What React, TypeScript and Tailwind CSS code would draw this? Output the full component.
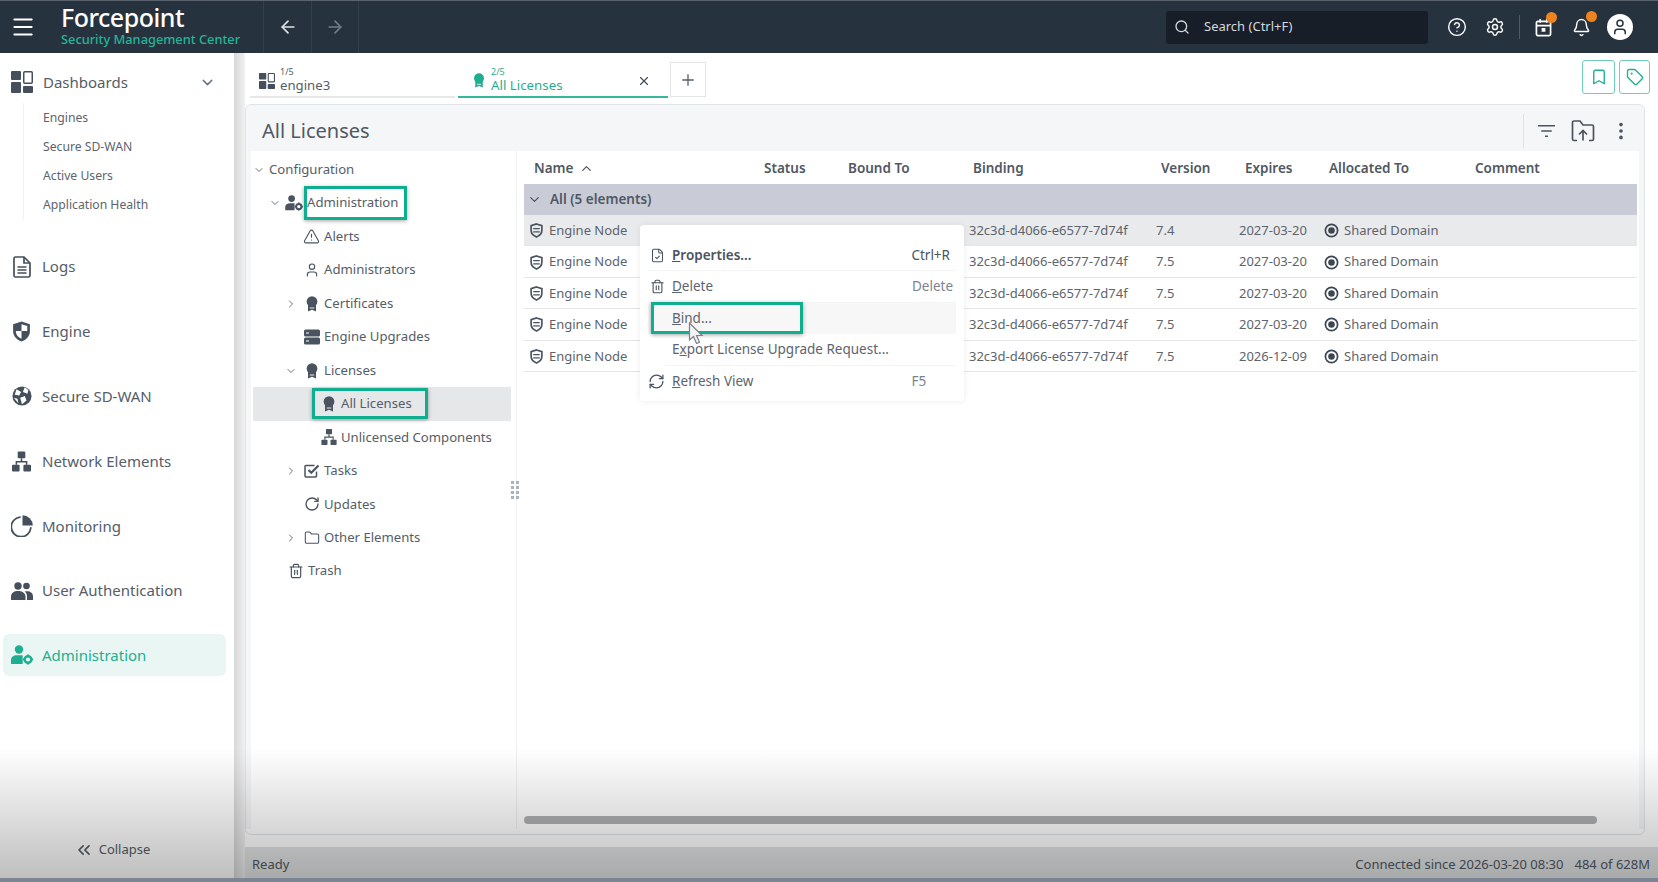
import type { ReactNode } from "react";
import {
  ArrowLeft,
  ArrowRight,
  Bell,
  Bookmark,
  ChevronDown,
  ChevronRight,
  ChevronUp,
  ChevronsLeft,
  CircleHelp,
  FileCheck,
  Folder,
  Menu,
  MoreVertical,
  Plus,
  RefreshCw,
  RotateCw,
  Search,
  Settings,
  Tag,
  Trash2,
  TriangleAlert,
  User,
  X,
} from "lucide-react";

const FONT = { fontFamily: '"Noto Sans", "Open Sans", sans-serif' };

function DashIcon({ className }: { className?: string }) {
  return (
    <svg viewBox="0 0 22 22" className={className} fill="currentColor">
      <rect x="0" y="0" width="10" height="9" rx="1" />
      <rect x="12.75" y="0.75" width="8.5" height="11.5" rx="1" fill="none" stroke="currentColor" strokeWidth="1.5" />
      <rect x="0" y="11" width="10" height="11" rx="1" />
      <rect x="12" y="15" width="10" height="7" rx="1" />
    </svg>
  );
}

function LogsIcon({ className }: { className?: string }) {
  return (
    <svg viewBox="0 0 18 22" className={className} fill="none" stroke="currentColor" strokeWidth="1.7">
      <path d="M2.5 1h8.5l6 6v12.5a1.5 1.5 0 0 1-1.5 1.5h-13A1.5 1.5 0 0 1 1 19.5v-17A1.5 1.5 0 0 1 2.5 1z" />
      <path d="M11 1v6h6M4.5 11h9M4.5 14h9M4.5 17h9" />
    </svg>
  );
}

function ShieldIcon({ className }: { className?: string }) {
  return (
    <svg viewBox="0 0 18 20" className={className}>
      <path d="M9 0.5l8 2.5v6.5c0 5-3.4 8.4-8 10-4.6-1.6-8-5-8-10V3z" fill="currentColor" />
      <path d="M9 3l5.5 1.8V9.5H9zM9 9.5v7.5c-3-1.300-5.300-3.800-5.500-7.500z" fill="#fff" />
    </svg>
  );
}

function GlobeIcon({ className }: { className?: string }) {
  return (
    <svg viewBox="0 0 22 22" className={className}>
      <circle cx="11" cy="11" r="10.500" fill="currentColor" />
      <path d="M5 3.500l5 3-2 4-5-1zM14 1.500l4 3-1 4-5-2zM9 13l5-2 2 5-5 4zM2 13l4 1 1 5z" fill="#fff" />
      <circle cx="11" cy="10" r="2" fill="currentColor" />
    </svg>
  );
}

function NetworkIcon({ className }: { className?: string }) {
  return (
    <svg viewBox="0 0 20 21" className={className} fill="currentColor">
      <rect x="6" y="0" width="8" height="7" rx="1" />
      <rect x="0" y="14" width="8" height="7" rx="1" />
      <rect x="12" y="14" width="8" height="7" rx="1" />
      <path d="M9.200 7h1.600v3h5.400v4h-1.600v-2.400H5.400V14H3.800v-4h5.400z" />
    </svg>
  );
}

function PieIcon({ className }: { className?: string }) {
  return (
    <svg viewBox="0 0 22 22" className={className}>
      <path d="M9 2.200a9.800 9.800 0 1 0 10.800 10.800" fill="none" stroke="currentColor" strokeWidth="1.800" strokeLinecap="round" />
      <path d="M11.500 0.200A10.500 10.500 0 0 1 21.800 10.500H11.500z" fill="currentColor" />
    </svg>
  );
}

function UsersIcon({ className }: { className?: string }) {
  return (
    <svg viewBox="0 0 22 18" className={className} fill="currentColor">
      <circle cx="7" cy="4" r="3.700" />
      <circle cx="15.500" cy="4" r="3.300" />
      <path d="M0 18v-3.500C0 11 3 9 7 9s7.500 2 7.500 5.500V18z" />
      <path d="M16 18v-3.500c0-2-.8-3.700-2.300-4.900.7-.3 1.400-.4 2.300-.4 3.500 0 6 2 6 5V18z" />
    </svg>
  );
}

function AdminIcon({ className }: { className?: string }) {
  return (
    <svg viewBox="0 0 22 20" className={className} fill="currentColor">
      <circle cx="8" cy="4.500" r="4.200" />
      <path d="M0 19v-4c0-3 2.500-4.800 6-4.800h4c1 0 1.700.2 1.700.2V19z" />
      <circle cx="17" cy="14.500" r="3.300" fill="none" stroke="currentColor" strokeWidth="2.400" />
      <path d="M16 9.500h2v2h-2zM16 17.500h2v2h-2zM12 13.500h2v2h-2zM20 13.500h2v2h-2z" />
    </svg>
  );
}

function RibbonIcon({ className }: { className?: string }) {
  return (
    <svg viewBox="0 0 14 18" className={className} fill="currentColor">
      <path d="M2.500 10v7.500l4.500-2 4.500 2V10z" />
      <circle cx="7" cy="6.200" r="6" />
      <path d="M4.500 13h5v1h-5z" fill="#fff" />
    </svg>
  );
}

function ServerIcon({ className }: { className?: string }) {
  return (
    <svg viewBox="0 0 16 15" className={className} fill="currentColor">
      <rect x="0" y="0" width="16" height="7" rx="1.500" />
      <rect x="0" y="8" width="16" height="7" rx="1.500" />
      <rect x="2" y="3" width="3" height="1" fill="#fff" />
      <rect x="2" y="11" width="3" height="1" fill="#fff" />
    </svg>
  );
}

function TaskIcon({ className }: { className?: string }) {
  return (
    <svg viewBox="0 0 16 16" className={className} fill="none" stroke="currentColor" strokeWidth="1.500">
      <path d="M12.500 8.500V13a1 1 0 0 1-1 1H2a1 1 0 0 1-1-1V3.500a1 1 0 0 1 1-1h8.500" />
      <path d="M4.500 7l2.800 2.800L14.500 2.500" strokeWidth="2.200" />
    </svg>
  );
}

function EngineShield({ className }: { className?: string }) {
  return (
    <svg viewBox="0 0 14 16" className={className} fill="none" stroke="currentColor" strokeWidth="1.800">
      <path d="M7 1l5.800 1.800v5c0 3.500-2.500 5.900-5.800 7.200-3.300-1.300-5.800-3.700-5.800-7.200v-5z" />
      <path d="M3.500 6h7M3.500 9.500h7" strokeWidth="1.400" />
    </svg>
  );
}

function DomainIcon({ className }: { className?: string }) {
  return (
    <svg viewBox="0 0 16 16" className={className}>
      <circle cx="8" cy="8" r="6.500" fill="none" stroke="currentColor" strokeWidth="1.800" />
      <circle cx="8" cy="8" r="3.500" fill="currentColor" />
    </svg>
  );
}

function Cursor() {
  return (
    <svg viewBox="0 0 16 24" className="absolute left-[48px] top-[97px] w-[16px] h-[24px]">
      <path d="M1.500 1v17l4-3.500 3 7 3-1.300-3-6.700h5.500z" fill="#f3f4f5" stroke="#7b8087" strokeWidth="1.200" />
    </svg>
  );
}

const subItems = ["Engines", "Secure SD-WAN", "Active Users", "Application Health"];

const navItems = [
  { label: "Logs", icon: <LogsIcon className="w-[18px] h-[22px] ml-[2px]" /> },
  { label: "Engine", icon: <ShieldIcon className="w-[19px] h-[21px] ml-[1px]" /> },
  { label: "Secure SD-WAN", icon: <GlobeIcon className="w-[20px] h-[20px] ml-[1px]" /> },
  { label: "Network Elements", icon: <NetworkIcon className="w-[19px] h-[21px] ml-[1px]" /> },
  { label: "Monitoring", icon: <PieIcon className="w-[22px] h-[22px]" /> },
  { label: "User Authentication", icon: <UsersIcon className="w-[22px] h-[18px]" /> },
];

function Sidebar() {
  return (
    <aside className="w-[234px] h-full flex flex-col bg-white pt-[8px]">
      <div className="h-[42px] flex items-center pl-[11px] pr-[18px] text-[#46505c]">
        <DashIcon className="w-[22px] h-[22px]" />
        <span className="ml-[10px] text-[15px] text-[#555d67]">Dashboards</span>
        <ChevronDown className="ml-auto w-[17px] h-[17px] text-[#6b737d]" />
      </div>
      <div className="ml-[23px] border-l border-[#f0f1f2] text-[12.200px] text-[#5d646d]">
        {subItems.map((s) => (
          <div key={s} className="h-[29.300px] flex items-center pl-[19px]">
            {s}
          </div>
        ))}
      </div>
      <div className="mt-[25.500px] flex flex-col gap-[22.800px]">
        {navItems.map((n) => (
          <div key={n.label} className="h-[42px] flex items-center ml-[3px] mr-[8px] pl-[8px] text-[#46505c]">
            <div className="w-[22px] flex items-center">{n.icon}</div>
            <span className="ml-[9px] text-[15px] text-[#555d67]">{n.label}</span>
          </div>
        ))}
        <div className="h-[42px] flex items-center ml-[3px] mr-[8px] pl-[8px] rounded-md bg-[#e9f6f3] text-[#1fae90]">
          <AdminIcon className="w-[22px] h-[20px]" />
          <span className="ml-[9px] text-[15px]">Administration</span>
        </div>
      </div>
      <div className="mt-auto mb-[18px] pr-[10px] flex items-center justify-center text-[13px] text-[#555d67] gap-[5px]">
        <ChevronsLeft className="w-[20px] h-[20px]" />
        <span>Collapse</span>
      </div>
    </aside>
  );
}

function TopBar() {
  return (
    <header className="h-[53px] shrink-0 flex items-stretch bg-[#27323f] border-t border-[#59626d] text-white">
      <div className="w-[46px] flex items-center justify-center">
        <Menu className="w-[26px] h-[26px]" strokeWidth={1.800} />
      </div>
      <div className="w-[217px] pl-[15px] pt-[3px] flex flex-col">
        <span className="text-[25px] leading-[27px] font-medium tracking-[-0.5px]">Forcepoint</span>
        <span className="text-[12.800px] leading-[15px] mt-[1px] text-[#25b597] font-medium">Security Management Center</span>
      </div>
      <div className="w-[48px] flex items-center justify-center border-l border-[#333f4c]">
        <ArrowLeft className="w-[20px] h-[20px] text-[#dfe3e6]" />
      </div>
      <div className="w-[48px] flex items-center justify-center border-x border-[#333f4c]">
        <ArrowRight className="w-[20px] h-[20px] text-[#737d88]" />
      </div>
      <div className="ml-auto flex items-center pr-[25px]">
        <div className="w-[262px] h-[33px] rounded-[3px] bg-[#171e28] flex items-center pl-[8px] text-[13px] text-[#d5d9dd]">
          <Search className="w-[16px] h-[16px]" />
          <span className="ml-[14px]">Search (Ctrl+F)</span>
        </div>
        <CircleHelp className="ml-[19px] w-[20px] h-[20px]" strokeWidth={1.700} />
        <Settings className="ml-[18px] w-[20px] h-[20px]" strokeWidth={1.700} />
        <div className="ml-[14px] w-px h-[24px] bg-[#515b66]" />
        <div className="relative ml-[15px]">
          <svg viewBox="0 0 18 20" className="w-[17px] h-[19px]" fill="none" stroke="currentColor" strokeWidth="1.800">
            <rect x="1.500" y="3.500" width="15" height="15" rx="1.500" />
            <path d="M1.500 8h15M5.500 1v4M12.500 1v4" />
            <rect x="7" y="10.500" width="4" height="4" fill="currentColor" stroke="none" />
          </svg>
          <span className="absolute -top-[6px] right-[-5px] w-[11px] h-[11px] rounded-full bg-[#ee8420]" />
        </div>
        <div className="relative ml-[20px]">
          <Bell className="w-[19px] h-[19px]" strokeWidth={1.800} />
          <span className="absolute -top-[7px] right-[-6px] w-[11px] h-[11px] rounded-full bg-[#ee8420]" />
        </div>
        <div className="ml-[16px] w-[26px] h-[26px] rounded-full bg-white flex items-center justify-center text-[#27323f]">
          <User className="w-[18px] h-[18px]" strokeWidth={2} />
        </div>
      </div>
    </header>
  );
}

function TabBar() {
  return (
    <div className="h-[51px] shrink-0 flex items-start relative pr-[8px]">
      <div className="ml-[5px] mt-[3px] w-[205px] h-[42px] pt-[9px] border-b-2 border-[#e6e8ea] flex items-center pl-[9px] text-[#46505c]">
        <DashIcon className="w-[16px] h-[16px]" />
        <div className="ml-[5px] flex flex-col">
          <span className="text-[9px] leading-[10px] text-[#555d67]">1/5</span>
          <span className="text-[13.200px] leading-[17px] text-[#555d67]">engine3</span>
        </div>
      </div>
      <div className="ml-[3px] mt-[3px] w-[210px] h-[42px] pt-[9px] border-b-2 border-[#34b79c] flex items-center pl-[15px] pr-[17px] text-[#1fae90]">
        <RibbonIcon className="w-[12px] h-[15px]" />
        <div className="ml-[6px] flex flex-col">
          <span className="text-[9px] leading-[10px]">2/5</span>
          <span className="text-[13.300px] leading-[17px]">All Licenses</span>
        </div>
        <X className="ml-auto w-[14px] h-[14px] text-[#46505c]" />
      </div>
      <div className="ml-[2px] mt-[9px] w-[36px] h-[35px] border border-[#e3e5e8] flex items-center justify-center text-[#555d67]">
        <Plus className="w-[18px] h-[18px]" strokeWidth={1.700} />
      </div>
      <div className="ml-auto mt-[7px] flex gap-[4px]">
        <div className="w-[33px] h-[34px] rounded-[3px] border border-[#6fcdb9] flex items-center justify-center text-[#1fae90]">
          <Bookmark className="w-[18px] h-[18px]" strokeWidth={1.800} />
        </div>
        <div className="w-[31px] h-[34px] rounded-[3px] border border-[#6fcdb9] flex items-center justify-center text-[#1fae90]">
          <Tag className="w-[18px] h-[18px]" strokeWidth={1.800} />
        </div>
      </div>
    </div>
  );
}

type TreeRow = {
  label: string;
  indent: string;
  chevron?: "down" | "right";
  gap?: string;
  icon?: ReactNode;
  selected?: boolean;
  box?: string;
};

const treeIcon = "w-[16px] h-[16px] shrink-0 text-[#4a5460]";

const treeRows: TreeRow[] = [
  { label: "Configuration", indent: "pl-[0px]", chevron: "down" },
  {
    label: "Administration",
    indent: "pl-[16px]",
    chevron: "down",
    icon: <AdminIcon className="w-[18px] h-[16px] shrink-0 text-[#4a5460]" />,
    box: "left-[-3px] w-[103px]",
  },
  { label: "Alerts", indent: "pl-[50px]", icon: <TriangleAlert className="w-[17px] h-[17px] shrink-0 text-[#4a5460]" strokeWidth={1.600} /> },
  { label: "Administrators", indent: "pl-[51px]", icon: <User className={treeIcon} strokeWidth={1.700} /> },
  { label: "Certificates", indent: "pl-[32px]", chevron: "right", gap: "ml-[7px]", icon: <RibbonIcon className={treeIcon} /> },
  { label: "Engine Upgrades", indent: "pl-[51px]", icon: <ServerIcon className={treeIcon} /> },
  { label: "Licenses", indent: "pl-[32px]", chevron: "down", gap: "ml-[7px]", icon: <RibbonIcon className={treeIcon} /> },
  { label: "All Licenses", indent: "pl-[68px]", icon: <RibbonIcon className={treeIcon} />, selected: true },
  { label: "Unlicensed Components", indent: "pl-[68px]", icon: <NetworkIcon className={treeIcon} /> },
  { label: "Tasks", indent: "pl-[32px]", chevron: "right", gap: "ml-[7px]", icon: <TaskIcon className={treeIcon} /> },
  { label: "Updates", indent: "pl-[51px]", icon: <RotateCw className={treeIcon} strokeWidth={2} /> },
  { label: "Other Elements", indent: "pl-[32px]", chevron: "right", gap: "ml-[7px]", icon: <Folder className={treeIcon} strokeWidth={1.600} /> },
  { label: "Trash", indent: "pl-[35px]", icon: <Trash2 className={treeIcon} strokeWidth={1.800} /> },
];

function Highlight({ className }: { className: string }) {
  return <div className={"absolute border-[3px] border-[#0fae8f] shadow-[0_1px_4px_rgba(0,0,0,0.35)] " + className} />;
}

function Tree() {
  return (
    <div className="w-[266px] shrink-0 pl-[2px] pr-[5px] pt-[2px] border-r border-[#eef0f1] text-[13.150px] text-[#555d67] relative">
      {treeRows.map((r) => (
        <div key={r.label} className={"h-[33.480px] flex items-center " + r.indent + (r.selected ? " bg-[#e6e7e9]" : "")}>
          {r.chevron === "down" && <ChevronDown className="w-[12px] h-[12px] shrink-0 text-[#6b737d]" />}
          {r.chevron === "right" && <ChevronRight className="w-[12px] h-[12px] shrink-0 text-[#6b737d]" />}
          {r.label === "Administration" && <span className="w-[4px]" />}
          {r.gap && <span className={r.gap} />}
          {r.icon}
          <span className="relative ml-[4px] whitespace-nowrap">
            {r.label}
            {r.box && <Highlight className={r.box + " -top-[7px] h-[34px]"} />}
            {r.selected && <Highlight className="left-[-29px] w-[116px] -top-[6px] h-[31px]" />}
          </span>
        </div>
      ))}
      <div className="absolute right-[-3px] top-[330px] grid grid-cols-2 gap-[2px]">
        {[0, 1, 2, 3, 4, 5, 6, 7].map((i) => (
          <span key={i} className="w-[3px] h-[3px] bg-[#aab2ba]" />
        ))}
      </div>
    </div>
  );
}

const licenseRows = [
  { version: "7.4", expires: "2027-03-20" },
  { version: "7.5", expires: "2027-03-20" },
  { version: "7.5", expires: "2027-03-20" },
  { version: "7.5", expires: "2027-03-20" },
  { version: "7.5", expires: "2026-12-09" },
];

function Mnemonic({ first, rest }: { first: string; rest: string }) {
  return (
    <span>
      <span className="underline">{first}</span>
      {rest}
    </span>
  );
}

function ContextMenu() {
  return (
    <div className="absolute left-[116px] top-[74px] w-[324px] h-[176px] bg-white rounded-[4px] shadow-[0_0_6px_rgba(0,0,0,0.08)] px-[8px] pt-[15px] text-[13.500px] text-[#5d646d]">
      <div className="h-[31.400px] flex items-center border-b border-[#f3f4f5]">
        <FileCheck className="ml-[2px] w-[15px] h-[15px] text-[#4a5460]" strokeWidth={1.700} />
        <span className="ml-[7px] font-semibold text-[#4a5460]">
          <Mnemonic first="P" rest="roperties..." />
        </span>
        <span className="ml-auto mr-[6px] text-[#4a5460]">Ctrl+R</span>
      </div>
      <div className="h-[31.400px] flex items-center border-b border-[#f3f4f5]">
        <Trash2 className="ml-[2px] w-[15px] h-[15px] text-[#4a5460]" strokeWidth={1.800} />
        <span className="ml-[7px]">
          <Mnemonic first="D" rest="elete" />
        </span>
        <span className="ml-auto mr-[3px] text-[#7c838b]">Delete</span>
      </div>
      <div className="relative h-[31.400px] flex items-center bg-[#f7f7f8] rounded-[2px]">
        <span className="ml-[24px]">
          <Mnemonic first="B" rest="ind..." />
        </span>
        <Highlight className="left-[3px] -top-[1px] w-[152px] h-[32px]" />
      </div>
      <div className="h-[31.400px] flex items-center border-b border-[#f3f4f5] ml-[18px]">
        <span className="ml-[6px]">
          E<span className="underline">x</span>port License Upgrade Request...
        </span>
      </div>
      <div className="h-[31.400px] flex items-center">
        <RefreshCw className="w-[17px] h-[17px] text-[#4a5460]" strokeWidth={1.800} />
        <span className="ml-[7px]">
          <Mnemonic first="R" rest="efresh View" />
        </span>
        <span className="ml-[158px] text-[#7c838b]">F5</span>
      </div>
      <Cursor />
    </div>
  );
}

const cols = "grid grid-cols-[240px_84px_125px_188px_84px_84px_146px_1fr]";

function LicenseTable() {
  return (
    <div className="relative flex-1 min-w-0 ml-[7px] mr-[2px] flex flex-col">
      <div className={cols + " h-[33px] pt-[2px] items-center text-[13.500px] font-semibold text-[#4f5863]"}>
        <div className="pl-[10px] flex items-center gap-[6px]">
          Name <ChevronUp className="w-[15px] h-[15px]" />
        </div>
        <div>Status</div>
        <div>Bound To</div>
        <div>Binding</div>
        <div>Version</div>
        <div>Expires</div>
        <div>Allocated To</div>
        <div>Comment</div>
      </div>
      <div className="h-[31px] bg-[#c9ccd6] flex items-center pl-[3px] text-[13.500px] font-semibold text-[#4f5863]">
        <ChevronDown className="w-[15px] h-[15px]" />
        <span className="ml-[8px]">All (5 elements)</span>
      </div>
      {licenseRows.map((row, i) => (
        <div
          key={i}
          className={cols + " h-[31.400px] pt-[1px] items-center border-b border-[#e3e5e8] text-[13px] text-[#5d646d]" + (i === 0 ? " bg-[#e9eaec]" : "")}
        >
          <div className="pl-[6px] flex items-center gap-[6px] text-[#5d646d]">
            <EngineShield className="w-[13px] h-[15px] text-[#4a5460]" />
            Engine Node
          </div>
          <div />
          <div />
          <div className="-ml-[4px] whitespace-nowrap">32c3d-d4066-e6577-7d74f</div>
          <div className="-ml-[5px]">{row.version}</div>
          <div className="-ml-[6px]">{row.expires}</div>
          <div className="flex items-center gap-[5px] -ml-[5px] whitespace-nowrap">
            <DomainIcon className="w-[15px] h-[15px] text-[#3d4752]" />
            Shared Domain
          </div>
          <div />
        </div>
      ))}
      <div className="mt-auto mb-[5px] h-[8px] w-[1073px] rounded-full bg-[#aeb0b2]" />
      <ContextMenu />
    </div>
  );
}

function Panel() {
  return (
    <section className="h-[731px] shrink-0 mr-[13px] rounded-[6px] border border-[#e2e5e8] bg-[#f5f6f7] flex flex-col overflow-hidden">
      <div className="h-[46px] shrink-0 flex items-center pt-[6px] pl-[16px] pr-[12px] text-[#4a5460]">
        <span className="text-[20px] text-[#4f5863]">All Licenses</span>
        <div className="ml-auto h-[34px] w-px bg-[#dfe2e5]" />
        <svg viewBox="0 0 20 14" className="ml-[13px] w-[19px] h-[14px]" fill="none" stroke="currentColor" strokeWidth="1.600">
          <path d="M1 1.500h18M4.500 7h11M8.500 12.500h3" />
        </svg>
        <svg viewBox="0 0 24 22" className="ml-[15px] w-[24px] h-[22px]" fill="none" stroke="currentColor" strokeWidth="1.700">
          <path d="M6 20.500H3a1.500 1.500 0 0 1-1.500-1.500V2.500A1.500 1.500 0 0 1 3 1h6l3 4h9a1.500 1.500 0 0 1 1.500 1.500V19a1.500 1.500 0 0 1-1.500 1.500h-3" />
          <path d="M12 20.500V11M8 14.500l4-4 4 4" />
        </svg>
        <MoreVertical className="ml-[15px] w-[22px] h-[22px]" strokeWidth={2} />
      </div>
      <div className="flex-1 min-h-0 mx-[5px] flex bg-white">
        <Tree />
        <LicenseTable />
      </div>
      <div className="h-[5px] shrink-0 bg-white" />
    </section>
  );
}

export default function App() {
  return (
    <div className="relative w-[1658px] h-[882px] overflow-hidden flex flex-col bg-white" style={FONT}>
      <TopBar />
      <div className="flex h-[825px] shrink-0">
        <Sidebar />
        <div className="w-[11px] shrink-0 bg-gradient-to-r from-[#d8d8d8] to-[#f1f1f1]" />
        <main className="flex-1 min-w-0 flex flex-col">
          <TabBar />
          <Panel />
          <div className="h-[12px] shrink-0" />
          <div className="h-[31px] shrink-0 bg-[#e2e3e4] flex items-center justify-between pl-[7px] pr-[8px] pt-[5px] text-[13px] text-[#4f5863]">
            <span>Ready</span>
            <span>
              Connected since 2026-03-20 08:30<span className="ml-[11px]">484 of 628M</span>
            </span>
          </div>
        </main>
      </div>
      <div className="h-[4px] shrink-0 bg-[#7b8594]" />
      {/* bottom fade that sits over the whole window */}
      <div className="absolute left-0 right-0 bottom-[4px] h-[130px] pointer-events-none bg-gradient-to-b from-transparent to-black/25" />
    </div>
  );
}
